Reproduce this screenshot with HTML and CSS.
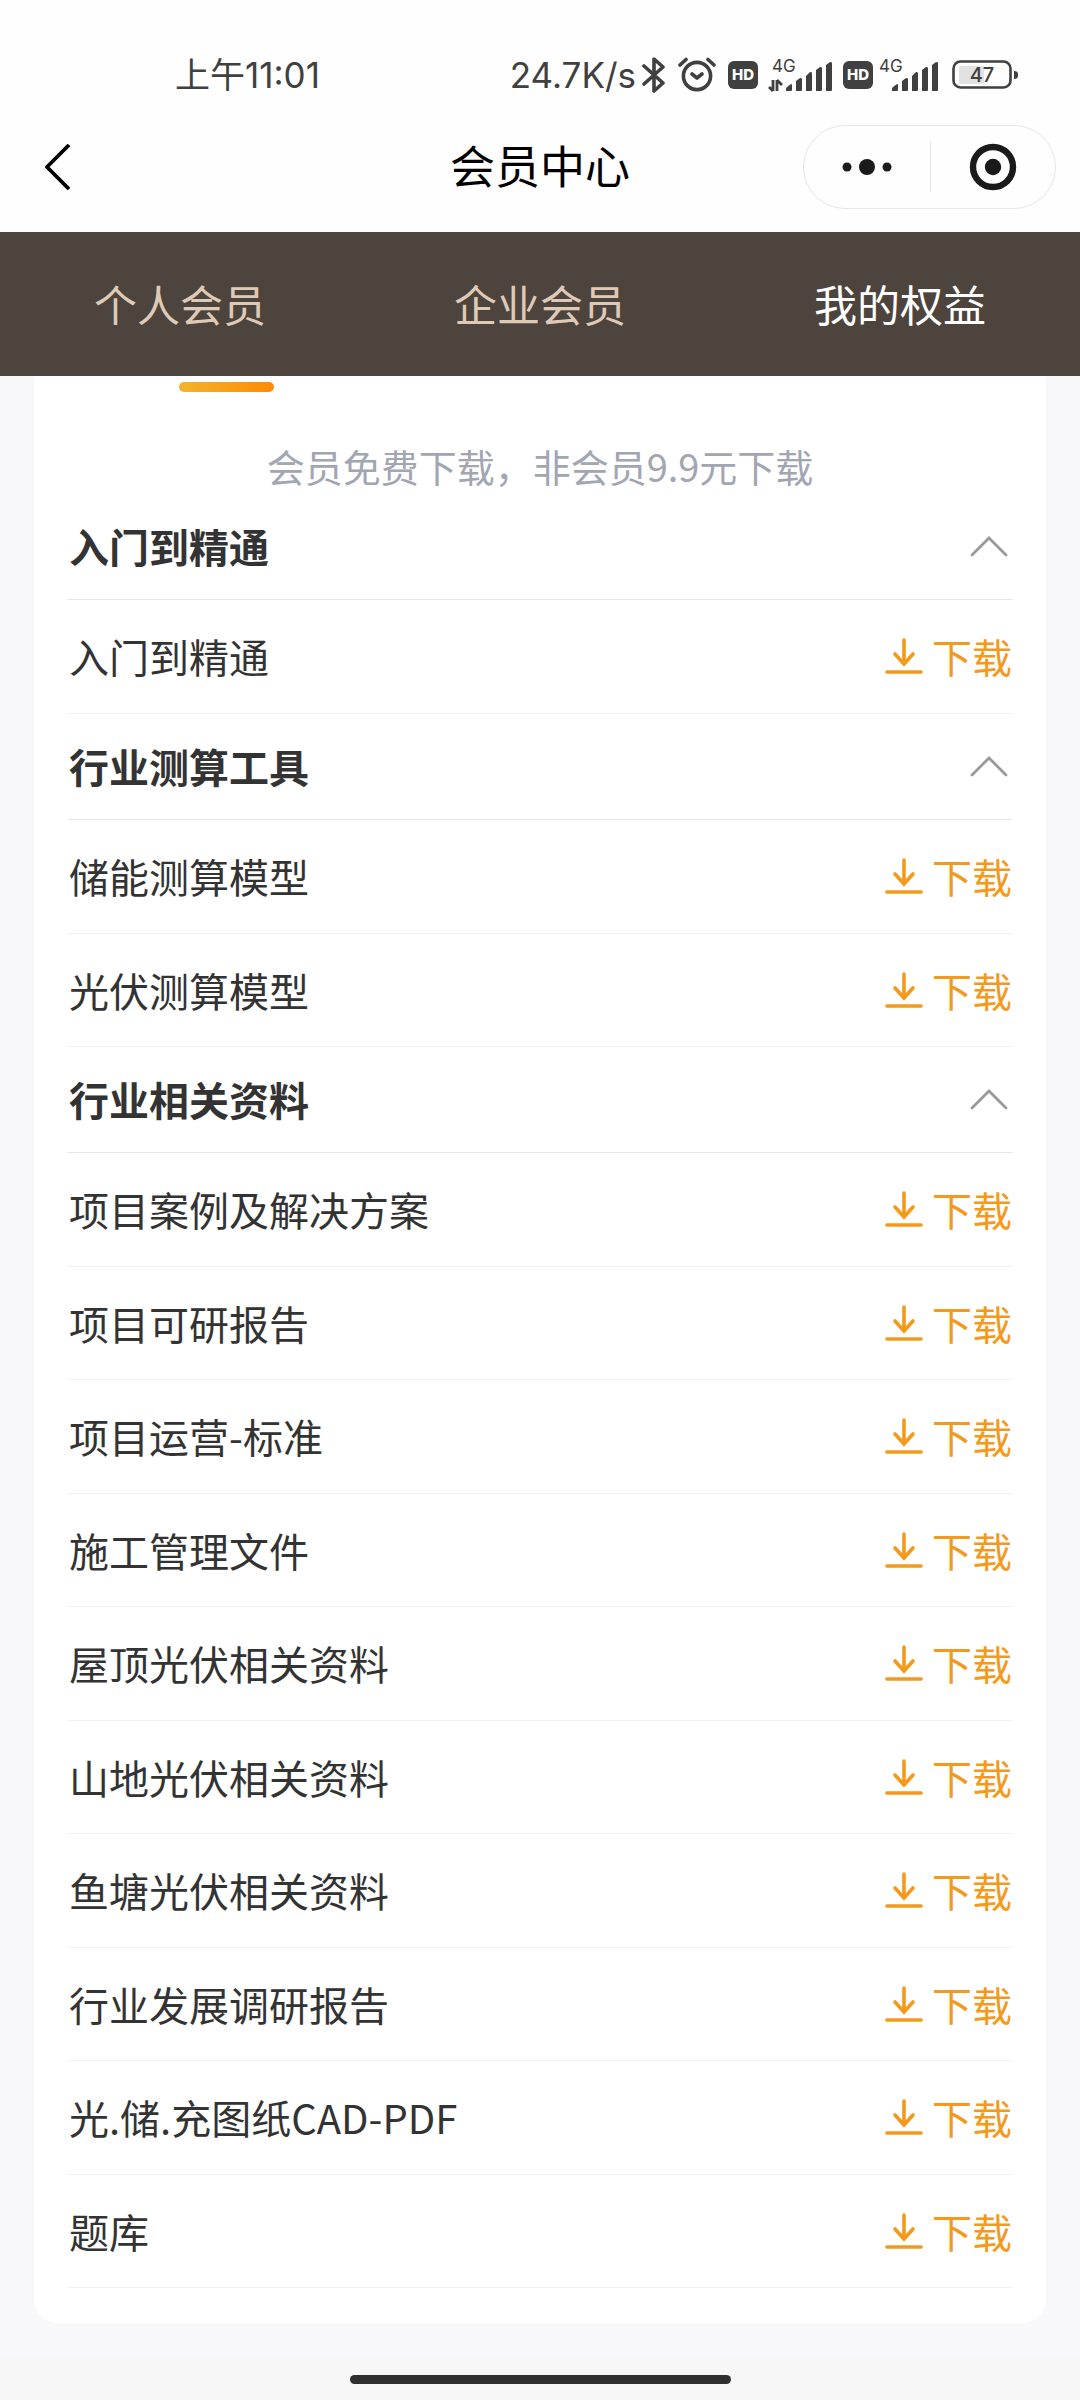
FILE: index.html
```html
<!DOCTYPE html>
<html lang="zh-CN">
<head>
<meta charset="utf-8">
<meta name="viewport" content="width=device-width, initial-scale=1">
<title>会员中心</title>
<link rel="stylesheet" href="styles.css">
</head>
<body>
<svg class="sprite" aria-hidden="true">
  <symbol id="i-download" viewBox="0 0 38 38">
    <path d="M19 3v24M10 17l9 10 9-10M2 35h34" fill="none" stroke="currentColor" stroke-width="3.6" stroke-linecap="round" stroke-linejoin="miter"/>
  </symbol>
  <symbol id="i-up" viewBox="0 0 38 22">
    <path d="M2 20L19 3l17 17" fill="none" stroke="currentColor" stroke-width="2.8" stroke-linecap="round"/>
  </symbol>
  <symbol id="i-bars" viewBox="0 0 46 30">
    <path d="M0 30v-2q0-1 1-2l4-3q1 0 1 1v5q0 1-1 1zM10 30V20l4-3q2 0 2 1v11q0 1-1 1zM20 30V15l4-4q2 0 2 1v17q0 1-1 1zM30 30V9l4-3q2 0 2 1v22q0 1-1 1zM40 30V4l4-3q2 0 2 1v27q0 1-1 1z" fill="currentColor"/>
  </symbol>
</svg>

<header class="top">
  <div class="status">
    <time class="clock">上午11:01</time>
    <div class="indicators">
      <span class="speed">24.7K/s</span>
      <svg class="bluetooth" viewBox="0 0 24 36" role="img" aria-label="蓝牙"><path d="M2 9l19 17-9 8V2l9 8L2 27" fill="none" stroke="currentColor" stroke-width="3.6" stroke-linecap="round" stroke-linejoin="round"/></svg>
      <svg class="alarm" viewBox="0 0 38 36" role="img" aria-label="闹钟"><g fill="none" stroke="currentColor" stroke-width="3.6" stroke-linecap="round" stroke-linejoin="round"><circle cx="19" cy="19" r="13.6"/><path d="M2 8l6-5.500M36 8l-6-5.500M14 17l5 4 5-4"/></g></svg>
      <span class="hd">HD</span>
      <svg class="signal-data" viewBox="0 -6 64 46" role="img" aria-label="4G 信号"><text x="4" y="14" class="net">4G</text><path d="M5 22v11M5 33l-4-4M9 33V22M9 22l5 5" fill="none" stroke="currentColor" stroke-width="2.800"/><use href="#i-bars" x="18" y="3" width="46" height="30"/></svg>
      <span class="hd hd-second">HD</span>
      <svg class="signal" viewBox="0 -6 60 46" role="img" aria-label="4G 信号"><text x="1" y="14" class="net">4G</text><use href="#i-bars" x="14" y="3" width="46" height="30"/></svg>
      <svg class="battery" viewBox="0 0 66 30" role="img" aria-label="电量 47"><rect x="7" y="6" width="25" height="18" rx="2" fill="#e2e2e2"/><rect x="1.500" y="1.500" width="57" height="26" rx="7" fill="none" stroke="currentColor" stroke-width="2.600"/><path d="M62 11q4 0 4 3v2q0 3-4 3z" fill="currentColor"/><text x="30" y="22" text-anchor="middle" class="charge">47</text></svg>
    </div>
  </div>
  <div class="nav">
    <button class="back" type="button" aria-label="返回"><svg viewBox="0 0 26 46"><path d="M24 1L2 23l22 22" fill="none" stroke="currentColor" stroke-width="3.800" stroke-linejoin="round"/></svg></button>
    <h1 class="title">会员中心</h1>
    <div class="capsule">
      <button type="button" aria-label="更多"><svg viewBox="0 0 50 48"><g fill="currentColor"><circle cx="5" cy="24" r="4.500"/><circle cx="25" cy="24" r="8"/><circle cx="45" cy="24" r="4.500"/></g></svg></button>
      <button type="button" aria-label="关闭"><svg viewBox="0 0 50 48"><circle cx="25" cy="24" r="20" fill="none" stroke="currentColor" stroke-width="6.400"/><circle cx="25" cy="24" r="8.200" fill="currentColor"/></svg></button>
    </div>
  </div>
</header>

<nav class="tabs">
  <button type="button">个人会员</button>
  <button type="button">企业会员</button>
  <button type="button" class="active" aria-current="page">我的权益</button>
</nav>

<main class="card">
  <div class="marker"></div>
  <p class="hint">会员免费下载，非会员9.9元下载</p>

  <section>
    <h2><button class="group" type="button" aria-expanded="true">入门到精通<svg><use href="#i-up"/></svg></button></h2>
    <ul class="items">
      <li><span>入门到精通</span><button class="download" type="button"><svg><use href="#i-download"/></svg>下载</button></li>
    </ul>
  </section>

  <section>
    <h2><button class="group" type="button" aria-expanded="true">行业测算工具<svg><use href="#i-up"/></svg></button></h2>
    <ul class="items">
      <li><span>储能测算模型</span><button class="download" type="button"><svg><use href="#i-download"/></svg>下载</button></li>
      <li><span>光伏测算模型</span><button class="download" type="button"><svg><use href="#i-download"/></svg>下载</button></li>
    </ul>
  </section>

  <section>
    <h2><button class="group" type="button" aria-expanded="true">行业相关资料<svg><use href="#i-up"/></svg></button></h2>
    <ul class="items">
      <li><span>项目案例及解决方案</span><button class="download" type="button"><svg><use href="#i-download"/></svg>下载</button></li>
      <li><span>项目可研报告</span><button class="download" type="button"><svg><use href="#i-download"/></svg>下载</button></li>
      <li><span>项目运营-标准</span><button class="download" type="button"><svg><use href="#i-download"/></svg>下载</button></li>
      <li><span>施工管理文件</span><button class="download" type="button"><svg><use href="#i-download"/></svg>下载</button></li>
      <li><span>屋顶光伏相关资料</span><button class="download" type="button"><svg><use href="#i-download"/></svg>下载</button></li>
      <li><span>山地光伏相关资料</span><button class="download" type="button"><svg><use href="#i-download"/></svg>下载</button></li>
      <li><span>鱼塘光伏相关资料</span><button class="download" type="button"><svg><use href="#i-download"/></svg>下载</button></li>
      <li><span>行业发展调研报告</span><button class="download" type="button"><svg><use href="#i-download"/></svg>下载</button></li>
      <li><span>光.储.充图纸CAD-PDF</span><button class="download" type="button"><svg><use href="#i-download"/></svg>下载</button></li>
      <li><span>题库</span><button class="download" type="button"><svg><use href="#i-download"/></svg>下载</button></li>
    </ul>
  </section>
</main>

<footer class="home"><div class="home-bar"></div></footer>
</body>
</html>
```

FILE: styles.css
```css
* {
  box-sizing: border-box;
}

body {
  margin: 0;
  min-height: 100vh;
  display: flex;
  flex-direction: column;
  background: #f8f8fa;
  color: #333;
  font-family: "Noto Sans CJK SC", sans-serif;
  font-size: 40px;
}

button {
  margin: 0;
  padding: 0;
  border: 0;
  background: none;
  color: inherit;
  font: inherit;
  cursor: pointer;
}

h1,
h2,
p,
ul {
  margin: 0;
  padding: 0;
  font-size: inherit;
}

svg {
  display: block;
  flex: none;
}

.sprite {
  position: absolute;
  width: 0;
  height: 0;
}

.top {
  background: #fefefe;
}

/* Status bar */
.status {
  display: flex;
  justify-content: space-between;
  align-items: center;
  padding: 50px 62px 0 175px;
  color: #404040;
  font-family: Inter, "Noto Sans CJK SC", sans-serif;
  font-size: 35px;
  line-height: 50px;
}

.indicators {
  display: flex;
  align-items: center;
}

.speed {
  margin-right: 6px;
}

.bluetooth {
  width: 24px;
  height: 36px;
  margin-right: 12px;
}

.alarm {
  width: 38px;
  height: 36px;
  margin-right: 12px;
}

.hd {
  width: 30px;
  height: 28px;
  margin-right: 10px;
  border-radius: 6px;
  background: #404040;
  color: #fff;
  font-size: 15px;
  font-weight: 800;
  line-height: 28px;
  text-align: center;
}

.hd-second {
  margin-right: 5px;
}

.signal-data {
  width: 64px;
  height: 46px;
  margin-right: 11px;
}

.signal {
  width: 60px;
  height: 46px;
  margin-right: 14px;
}

.net {
  fill: currentColor;
  font: 400 17px Inter, sans-serif;
}

.battery {
  width: 66px;
  height: 30px;
}

.charge {
  fill: currentColor;
  font: 500 20px Inter, sans-serif;
}

/* Title bar */
.nav {
  display: grid;
  grid-template-columns: 1fr auto 1fr;
  align-items: center;
  padding: 25px 24px 23px 45px;
  color: #000;
}

.back {
  justify-self: start;
}

.back svg {
  width: 26px;
  height: 46px;
}

.title {
  margin: 0 21px 4px 0;
  font-size: 45px;
  font-weight: 400;
  line-height: 60px;
}

.capsule {
  justify-self: end;
  display: grid;
  grid-template-columns: 1fr 1fr;
  width: 253px;
  height: 84px;
  padding: 16px 0;
  border: 1px solid #e6e6e6;
  border-radius: 42px;
  color: #1a1a1a;
}

.capsule button {
  display: grid;
  place-items: center;
}

.capsule button + button {
  border-left: 1px solid #e6e6e6;
}

.capsule svg {
  width: 50px;
  height: 48px;
}

/* Membership tabs */
.tabs {
  display: grid;
  grid-template-columns: repeat(3, 1fr);
  background: #4e443e;
  color: #dfcab8;
  font-size: 43px;
}

.tabs button {
  padding: 39px 0 41px;
  line-height: 64px;
}

.tabs .active {
  color: #fff;
}

/* Download list */
.card {
  margin: 0 34px;
  padding: 6px 34px 35px;
  border-radius: 0 0 24px 24px;
  background: #fff;
}

.marker {
  width: 95px;
  height: 10px;
  margin-left: 111px;
  border-radius: 5px;
  background: linear-gradient(90deg, #f3b42d, #ff8a05);
}

.hint {
  padding: 46px 0 0;
  color: #a2a6b2;
  font-size: 38px;
  line-height: 56px;
  text-align: center;
}

.group {
  display: flex;
  justify-content: space-between;
  align-items: center;
  width: 100%;
  padding: 22px 4px 23px 1px;
  border-bottom: 1px solid #e6e6e6;
  font-weight: 700;
  line-height: 60px;
  text-align: left;
}

.group svg {
  width: 38px;
  height: 22px;
  color: #999;
}

.items {
  list-style: none;
}

.items li {
  display: flex;
  justify-content: space-between;
  align-items: center;
  padding: 26px 0 27px 1px;
  border-bottom: 1px solid #f0f0f0;
  line-height: 60px;
}

.items li:nth-child(even) {
  padding-bottom: 26px;
}

.download {
  display: flex;
  align-items: center;
  gap: 9px;
  color: #f39a1c;
}

.download svg {
  width: 38px;
  height: 38px;
}

/* System gesture bar */
.home {
  margin-top: auto;
  padding: 17px 0 16px;
  background: #f7f7f7;
}

.home-bar {
  width: 381px;
  height: 9px;
  margin: 0 auto;
  border-radius: 5px;
  background: #303030;
}
```
